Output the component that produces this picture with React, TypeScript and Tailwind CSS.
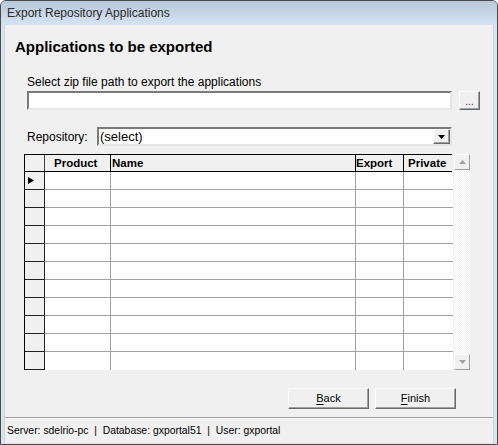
import React from 'react';

const font = "font-['Liberation_Sans',Arial,sans-serif]";

const UpArrow = ({ color = '#a3a3a3' }: { color?: string }) => (
  <svg width="7" height="4" viewBox="0 0 7 4">
    <path d="M3.5 0 L7 4 L0 4 Z" fill={color} />
  </svg>
);

const DownArrow = ({ color = '#a3a3a3' }: { color?: string }) => (
  <svg width="7" height="4" viewBox="0 0 7 4">
    <path d="M0 0 L7 0 L3.5 4 Z" fill={color} />
  </svg>
);

const ROWS = 11;

function cn(...parts: (string | false | undefined)[]) {
  return parts.filter(Boolean).join(' ');
}

const Grid = () => {
  const cols = 'grid grid-cols-[20px_66px_245px_48px_49px]';
  return (
    <div className="flex ml-[19px] mt-[8px] h-[216px]">
      <div className="w-[428px] h-full border-t border-l border-black bg-[#f0f0f0] flex flex-col">
        {/* column headers */}
        <div className={cn(cols, 'h-[17px] border-b border-black text-[11.5px] font-bold text-black leading-[16px]')}>
          <div className="border-r border-[#404040] bg-[#f0f0f0]" />
          <div className="border-r border-black pl-[9px]">Product</div>
          <div className="border-r border-black pl-[1px]">Name</div>
          <div className="border-r border-black pl-0">Export</div>
          <div className="pl-[4px]">Private</div>
        </div>
        {Array.from({ length: ROWS }).map((_, i) => (
          <div key={i} className={cn(cols, 'h-[18px]')}>
            <div className="border-r border-b border-[#202020] bg-[#f0f0f0] flex items-center pl-[3px]">
              {i === 0 && (
                <svg width="6" height="7" viewBox="0 0 6 7">
                  <path d="M0 0 L6 3.5 L0 7 Z" fill="#000" />
                </svg>
              )}
            </div>
            <div className={cn('bg-white border-r border-[#a0a0a0]', i < ROWS - 1 && 'border-b')} />
            <div className={cn('bg-white border-r border-[#a0a0a0]', i < ROWS - 1 && 'border-b')} />
            <div className={cn('bg-white border-r border-[#a0a0a0]', i < ROWS - 1 && 'border-b')} />
            <div className={cn('bg-white border-[#a0a0a0]', i < ROWS - 1 && 'border-b')} />
          </div>
        ))}
      </div>
      {/* vertical scrollbar */}
      <div className="ml-[2px] w-[16px] h-full flex flex-col bg-[repeating-conic-gradient(#f0f0f0_0_25%,#ffffff_0_50%)] bg-[length:2px_2px]">
        <div className="h-[16px] bg-[#f0f0f0] border border-t-white border-l-white border-r-[#a0a0a0] border-b-[#a0a0a0] flex items-center justify-center">
          <UpArrow />
        </div>
        <div className="flex-1" />
        <div className="h-[16px] bg-[#f0f0f0] border border-t-white border-l-white border-r-[#a0a0a0] border-b-[#a0a0a0] flex items-center justify-center">
          <DownArrow />
        </div>
      </div>
    </div>
  );
};

const Button = ({ label, hot }: { label: string; hot: string }) => (
  <button className="w-[81px] h-[21px] bg-[#f0f0f0] border border-t-white border-l-white border-r-[#696969] border-b-[#696969] shadow-[inset_-1px_-1px_0_#a0a0a0] text-[11px] text-black leading-none">
    <span className="underline underline-offset-2">{hot}</span>
    {label.slice(1)}
  </button>
);

export default function App() {
  return (
    <div className={cn(font, 'w-[498px] h-[445px] flex flex-col bg-[#d9e4f0] border border-[#4a4a4a] rounded-t-[6px] overflow-hidden')}>
      {/* title bar */}
      <div className="h-[24px] shrink-0 bg-gradient-to-b from-[#b8c8d9] to-[#d6e3f1] flex items-center pl-[6px] text-[12px] text-[#2b2b2b]">
        Export Repository Applications
      </div>

      {/* client area */}
      <div className="flex-1 mx-[3px] mb-[1px] bg-[#f0f0f0] border-l border-r border-[#c9d3de] flex flex-col text-black">
        <div className="h-[18px] leading-[18px] mt-[13px] ml-[10px] text-[15px] font-bold">
          Applications to be exported
        </div>

        <div className="h-[14px] leading-[14px] mt-[19px] ml-[22px] text-[12px]">
          Select zip file path to export the applications
        </div>

        <div className="flex mt-[2px] ml-[22px] h-[19px]">
          <div className="w-[425px] h-full bg-white border-2 border-t-[#7a7a7a] border-l-[#7a7a7a] border-r-[#e6e6e6] border-b-[#e6e6e6]" />
          <button className="ml-[7px] w-[21px] h-full bg-[#f0f0f0] border border-t-white border-l-white border-r-[#696969] border-b-[#696969] shadow-[inset_-1px_-1px_0_#a0a0a0] text-[10px] leading-none text-[#602060] pt-[2px]">
            ...
          </button>
        </div>

        <div className="flex items-center mt-[17px] ml-[22px] h-[19px]">
          <div className="w-[70px] text-[12px]">Repository:</div>
          <div className="w-[355px] h-full bg-white border-2 border-t-[#7a7a7a] border-l-[#7a7a7a] border-r-[#e6e6e6] border-b-[#e6e6e6] flex items-center">
            <div className="flex-1 pl-[1px] text-[13px] leading-none pb-[1px]">(select)</div>
            <div className="w-[17px] h-[15px] bg-[#f0f0f0] border border-t-white border-l-white border-r-[#696969] border-b-[#696969] shadow-[inset_-1px_-1px_0_#a0a0a0] flex items-center justify-center">
              <DownArrow color="#000" />
            </div>
          </div>
        </div>

        <Grid />

        <div className="flex justify-end gap-[6px] mt-[18px] pr-[37px]">
          <Button label="Back" hot="B" />
          <Button label="Finish" hot="F" />
        </div>

        <div className="flex-1" />

        <div className="h-[26px] border-t border-[#a0a0a0] shadow-[inset_0_1px_0_#ffffff] flex items-center pl-[2px] text-[10.4px] whitespace-pre">
          {'Server: sdelrio-pc  |  Database: gxportal51  |  User: gxportal'}
        </div>
      </div>
    </div>
  );
}
